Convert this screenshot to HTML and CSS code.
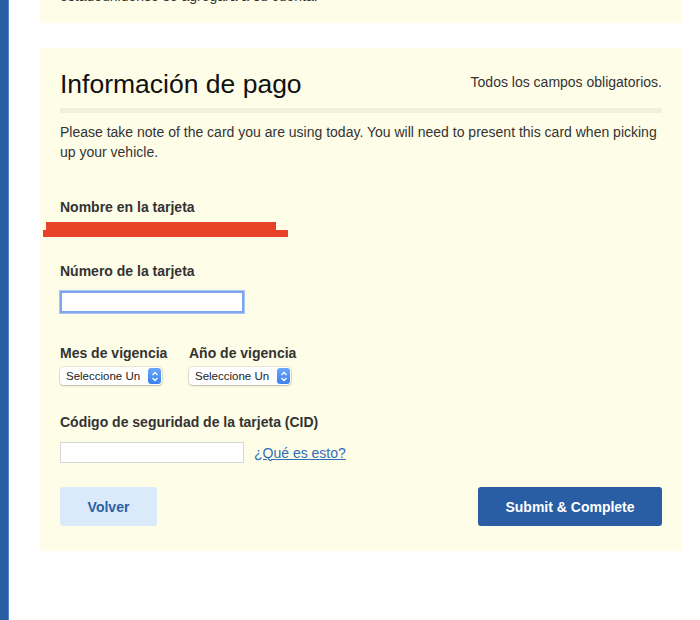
FILE: index.html
```html
<!DOCTYPE html>
<html lang="es">
<head>
<meta charset="utf-8"/>
<meta content="width=device-width, initial-scale=1.0" name="viewport"/>
<title>Información de pago</title>
<link rel="stylesheet" href="styles.css">
</head>
<body>
<div class="sidebar"></div>
<div class="main">
  <div class="panel panel-top">
    <p>estadounidense se agregará a su cuenta.</p>
  </div>

  <div class="panel">
    <div class="panel-head">
      <h2>Información de pago</h2>
      <span class="required">Todos los campos obligatorios.</span>
    </div>
    <div class="divider"></div>
    <p class="note">Please take note of the card you are using today. You will need to present this card when picking up your vehicle.</p>

    <div class="field field-name">
      <label>Nombre en la tarjeta</label>
      <svg class="redact" width="246" height="15" viewBox="0 0 246 15">
        <rect x="3" y="0" width="230" height="8" fill="#e8432a"/>
        <rect x="0" y="8" width="245" height="7" fill="#e8432a"/>
      </svg>
    </div>

    <div class="field field-number">
      <label for="cardNumber">Número de la tarjeta</label>
      <input id="cardNumber" class="text focused" type="text"/>
    </div>

    <div class="field field-exp">
      <div class="exp-col">
        <label>Mes de vigencia</label>
        <div class="select"><span>Seleccione Un</span><span class="arrows"><svg width="8" height="11" viewBox="0 0 8 11"><path d="M1.5 4 L4 1.5 L6.5 4 M1.5 7 L4 9.5 L6.5 7" fill="none" stroke="#fff" stroke-width="1.3"/></svg></span></div>
      </div>
      <div class="exp-col">
        <label>Año de vigencia</label>
        <div class="select"><span>Seleccione Un</span><span class="arrows"><svg width="8" height="11" viewBox="0 0 8 11"><path d="M1.5 4 L4 1.5 L6.5 4 M1.5 7 L4 9.5 L6.5 7" fill="none" stroke="#fff" stroke-width="1.3"/></svg></span></div>
      </div>
    </div>

    <div class="field field-cid">
      <label for="cid">Código de seguridad de la tarjeta (CID)</label>
      <div class="cid-row">
        <input id="cid" class="text" type="text"/>
        <a href="#">¿Qué es esto?</a>
      </div>
    </div>

    <div class="actions">
      <button class="btn btn-back">Volver</button>
      <button class="btn btn-submit">Submit &amp; Complete</button>
    </div>
  </div>
</div>
</body>
</html>
```
FILE: styles.css
```css
body {
  font-family: "Liberation Sans", Arial, sans-serif;
  margin: 0;
  display: flex;
  min-height: 620px;
  background: #fff;
  color: #333;
  overflow: hidden;
}
.sidebar {
  width: 9px;
  flex-shrink: 0;
  background: #2a5ea4;
  box-shadow: inset -1px 0 0 #4f86cf;
}
.main {
  width: 642px;
  margin-left: 31px;
}
.panel {
  background: #fefde8;
  padding: 18px 20px 25px;
  margin-top: 25px;
}
.panel-top {
  margin-top: -14px;
  padding: 0 20px 17px;
}
.panel-top p {
  margin: 0;
  font-size: 14px;
  line-height: 20px;
}
.panel-head {
  display: flex;
  justify-content: space-between;
  align-items: center;
  height: 32px;
  margin-bottom: 10px;
}
.panel-head h2 {
  margin: 0;
  font-size: 26.5px;
  font-weight: normal;
  color: #111;
  line-height: 32px;
  position: relative;
  top: 2px;
}
.required {
  font-size: 14px;
  color: #333;
}
.divider {
  height: 5px;
  background: #f1f0d8;
}
.note {
  margin: 9px 0 0;
  font-size: 14px;
  line-height: 20px;
}
label {
  display: block;
  font-size: 14px;
  font-weight: bold;
  line-height: 20px;
  color: #333;
}
.field-name { margin-top: 35px; }
.redact {
  display: block;
  margin: 5px 0 0 -17px;
}
.field-number { margin-top: 24px; }
.field-number label { margin-bottom: 10px; }
.text {
  display: block;
  box-sizing: border-box;
  width: 184px;
  height: 21px;
  margin: 0;
  border: 1px solid #d4d4d4;
  background: #fff;
  outline: none;
}
.text.focused {
  height: 22px;
  border: 2px solid #7ea6ee;
  box-shadow: 0 0 0 1px #a9c3f3;
}
.field-exp {
  margin-top: 30px;
  display: grid;
  grid-template-columns: 129px auto;
}
.field-exp label { margin-bottom: 4px; }
.select {
  width: 102px;
  height: 18px;
  box-sizing: border-box;
  display: flex;
  align-items: center;
  justify-content: space-between;
  background: #fff;
  border-radius: 4px;
  box-shadow: 0 0 0 1px rgba(0,0,0,0.08), 0 1px 2px rgba(0,0,0,0.2);
  font-size: 11.5px;
  color: #222;
  padding-left: 6px;
}
.arrows {
  width: 13px;
  height: 16px;
  margin-right: 1px;
  border-radius: 3px;
  background: linear-gradient(#6aa6fb, #3b82ee);
  display: flex;
  align-items: center;
  justify-content: center;
}
.field-cid { margin-top: 27px; }
.field-cid label { margin-bottom: 10px; }
.cid-row {
  display: flex;
  align-items: center;
  gap: 10px;
}
.cid-row a {
  color: #2f6db8;
  font-size: 14px;
}
.actions {
  display: flex;
  justify-content: space-between;
  margin-top: 24px;
}
.btn {
  height: 39px;
  border: none;
  border-radius: 3px;
  font-family: inherit;
  font-size: 14px;
  font-weight: bold;
  cursor: pointer;
}
.btn-back {
  width: 97px;
  background: #dbeafb;
  color: #2a5ea4;
}
.btn-submit {
  width: 184px;
  background: #2a5ea4;
  color: #fff;
}
```
